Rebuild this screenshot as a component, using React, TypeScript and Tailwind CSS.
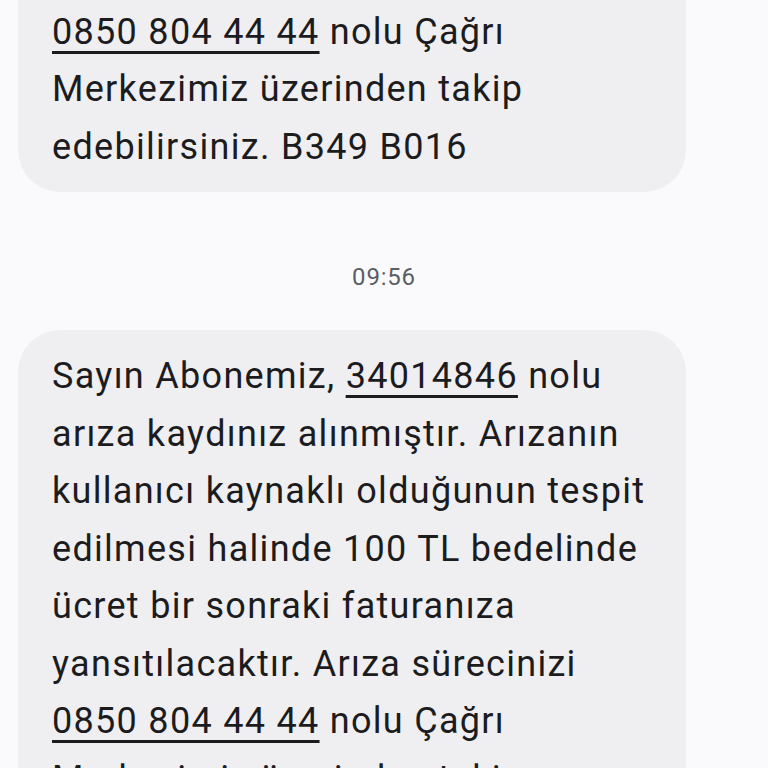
const first = [
  "yansıtılacaktır. Arıza sürecinizi",
  "__0850 804 44 44__ nolu Çağrı",
  "Merkezimiz üzerinden takip",
  "edebilirsiniz. B349 B016",
]

const second = [
  "Sayın Abonemiz, __34014846__ nolu",
  "arıza kaydınız alınmıştır. Arızanın",
  "kullanıcı kaynaklı olduğunun tespit",
  "edilmesi halinde 100 TL bedelinde",
  "ücret bir sonraki faturanıza",
  "yansıtılacaktır. Arıza sürecinizi",
  "__0850 804 44 44__ nolu Çağrı",
  "Merkezimiz üzerinden takip",
  "edebilirsiniz. B349 B016",
]

function Line({ text }: { text: string }) {
  const parts = text.split("__")
  return (
    <div className="h-[57.5px] leading-[57.5px] whitespace-nowrap">
      {parts.map((p, i) =>
        i % 2 === 1 ? (
          <span key={i} className="underline decoration-[3px] underline-offset-[7px]">
            {p}
          </span>
        ) : (
          <span key={i}>{p}</span>
        )
      )}
    </div>
  )
}

function Bubble({ lines, className }: { lines: string[]; className?: string }) {
  return (
    <div className={"mx-[18px] w-[668px] rounded-[42px] bg-[#efeff2] pl-[34px] pt-[18px] pb-[16px] text-[36px] tracking-[1.3px] text-[#1c1c1e] " + (className ?? "")}>
      {lines.map((l, i) => (
        <Line key={i} text={l} />
      ))}
    </div>
  )
}

export default function App() {
  return (
    <div className="h-screen overflow-hidden bg-[#fafafc]" style={{ fontFamily: "Roboto, 'Noto Sans', sans-serif" }}>
      <Bubble lines={first} className="-mt-[72px]" />
      <div className="h-[138px] pt-[70px] text-center text-[24px] leading-[30px] tracking-[0.8px] text-[#5b5e63]">09:56</div>
      <Bubble lines={second} />
    </div>
  )
}
